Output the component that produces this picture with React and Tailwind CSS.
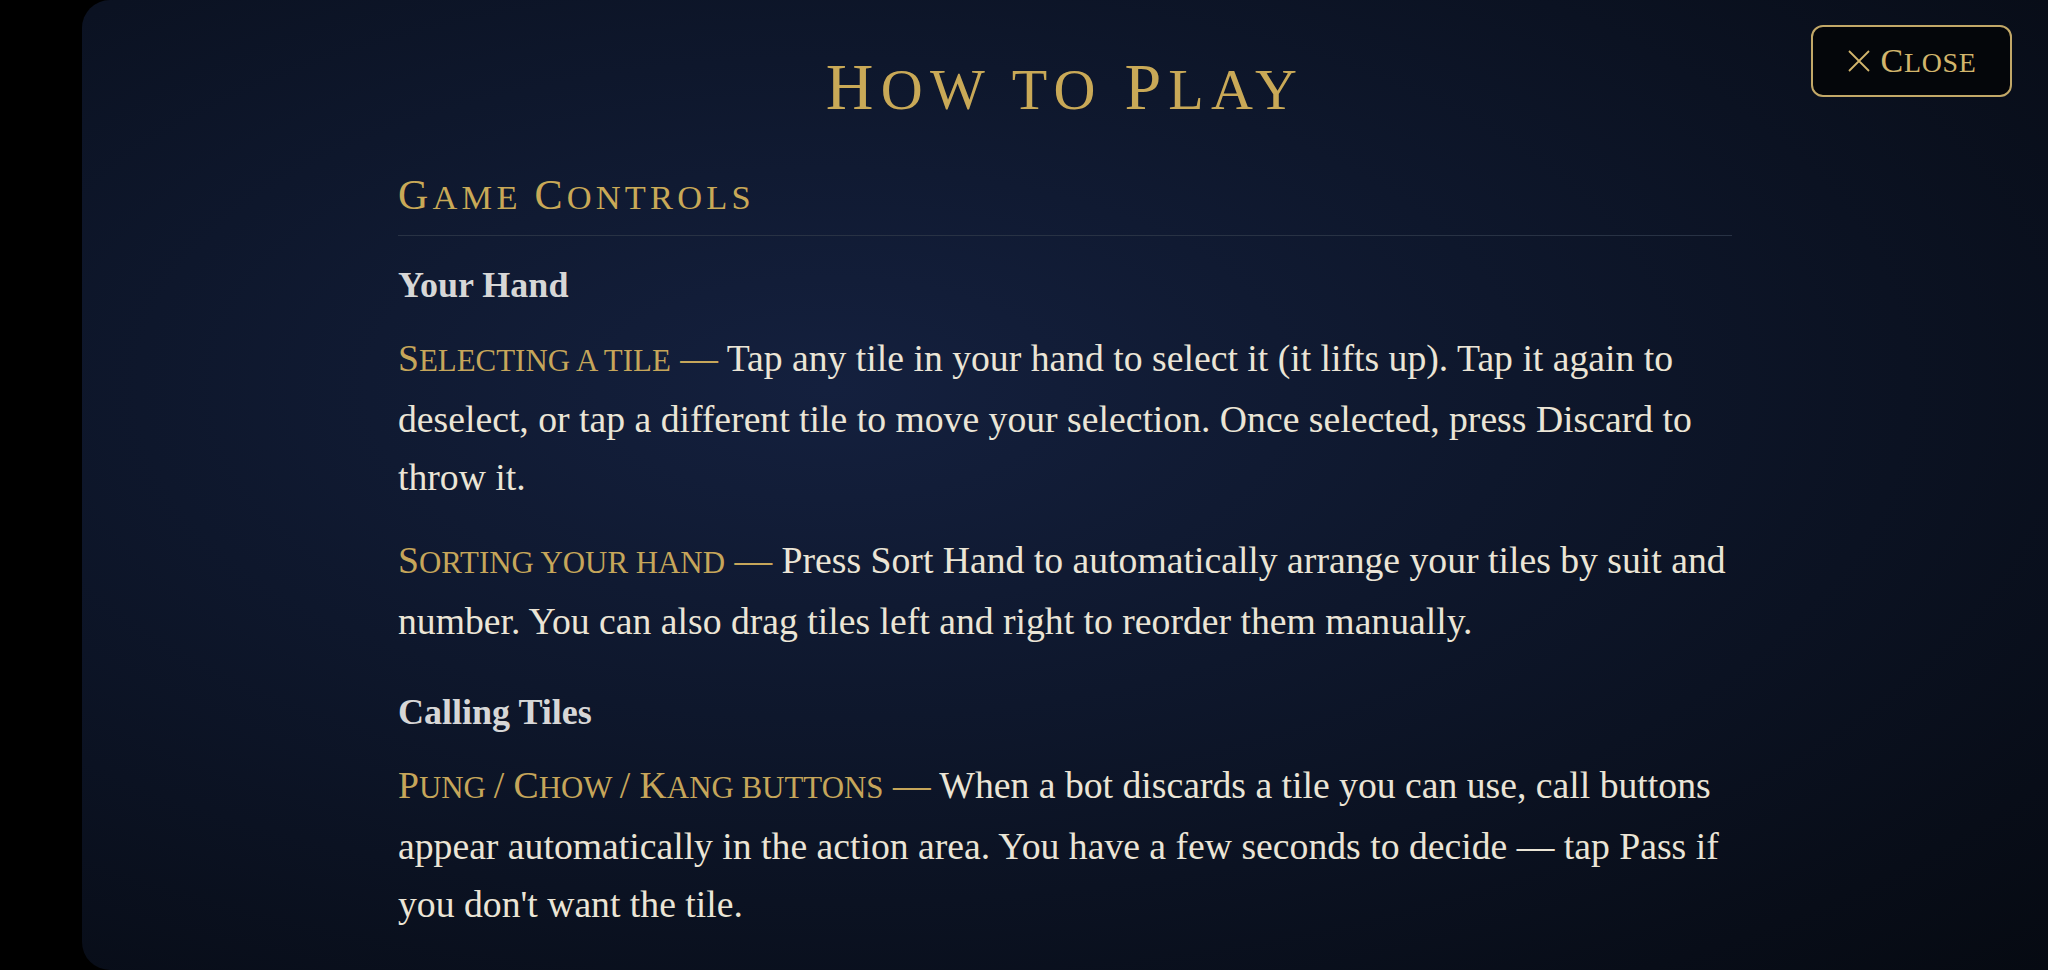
import React from 'react';

const serif = "font-['Liberation_Serif','DejaVu_Serif',serif]";

// Cinzel-style caps: capitals stay full size, lowercase runs become smaller capitals
const Caps = ({ text, small }) => {
  const runs = text.match(/[a-z ]+|[^a-z ]+/g) || [];
  return runs.map((run, i) =>
    /[a-z]/.test(run) ? (
      <span key={i} className={`uppercase ${small}`}>{run}</span>
    ) : (
      <span key={i}>{run}</span>
    )
  );
};

const Item = ({ label, children }) => (
  <p className="-mr-[16px] mb-[25px] text-[37.7px] leading-[58px] text-[#ebe5d6]">
    <span className="text-[#c6a65a]">
      <Caps text={label} small="text-[0.82em]" /> —
    </span>{' '}
    {children}
  </p>
);

const Sub = ({ children, first }) => (
  <h3
    className={`${first ? 'mt-[27px]' : 'mt-[40px]'} mb-[22px] text-[36px] leading-[44px] font-semibold text-[#d7d7d7]`}
  >
    {children}
  </h3>
);

const App = () => {
  return (
    <div className={`min-h-screen bg-black pl-[82px] ${serif}`}>
      <div className="relative h-[970px] overflow-hidden rounded-l-[28px] bg-[radial-gradient(ellipse_at_38%_40%,#14203e_0%,#0e172c_40%,#080d18_85%,#060a12_100%)]">
        <button className="absolute right-[36px] top-[25px] flex h-[72px] w-[201px] items-center justify-center gap-[10px] rounded-[12px] border-2 border-[#c2a868] bg-[#04060a] text-[34px] leading-none text-[#d2b56c]">
          <svg width="24" height="22" viewBox="0 0 24 22" fill="none" stroke="currentColor" strokeWidth="1.8">
            <path d="M2 1 L22 21 M22 1 L2 21" />
          </svg>
          <span className="tracking-[0.02em]">
            <Caps text="Close" small="text-[0.82em]" />
          </span>
        </button>

        <div className="mx-auto w-[1334px] pt-[54px]">
          <h1 className="text-center text-[66px] leading-[66px] tracking-[0.11em] text-[#c9a957]">
            <Caps text="How to Play" small="text-[0.88em]" />
          </h1>

          <h2 className="mt-[47px] border-b border-[#283244] pb-[13px] text-[42px] leading-[50px] tracking-[0.1em] text-[#c9a957]">
            <Caps text="Game Controls" small="text-[0.82em]" />
          </h2>

          <Sub first>Your Hand</Sub>
          <Item label="Selecting a tile">
            Tap any tile in your hand to select it (it lifts up). Tap it again to deselect, or tap a
            different tile to move your selection. Once selected, press Discard to throw it.
          </Item>
          <Item label="Sorting your hand">
            Press Sort Hand to automatically arrange your tiles by suit and number. You can also drag
            tiles left and right to reorder them manually.
          </Item>

          <Sub>Calling Tiles</Sub>
          <Item label="Pung / Chow / Kang buttons">
            When a bot discards a tile you can use, call buttons appear automatically in the action
            area. You have a few seconds to decide — tap Pass if you don't want the tile.
          </Item>
          <Item label="Declaring a win">
            The Tile button lights up when the discard completes your hand, so you can claim it and
            win the round.
          </Item>
        </div>
      </div>
    </div>
  );
};

export default App;
